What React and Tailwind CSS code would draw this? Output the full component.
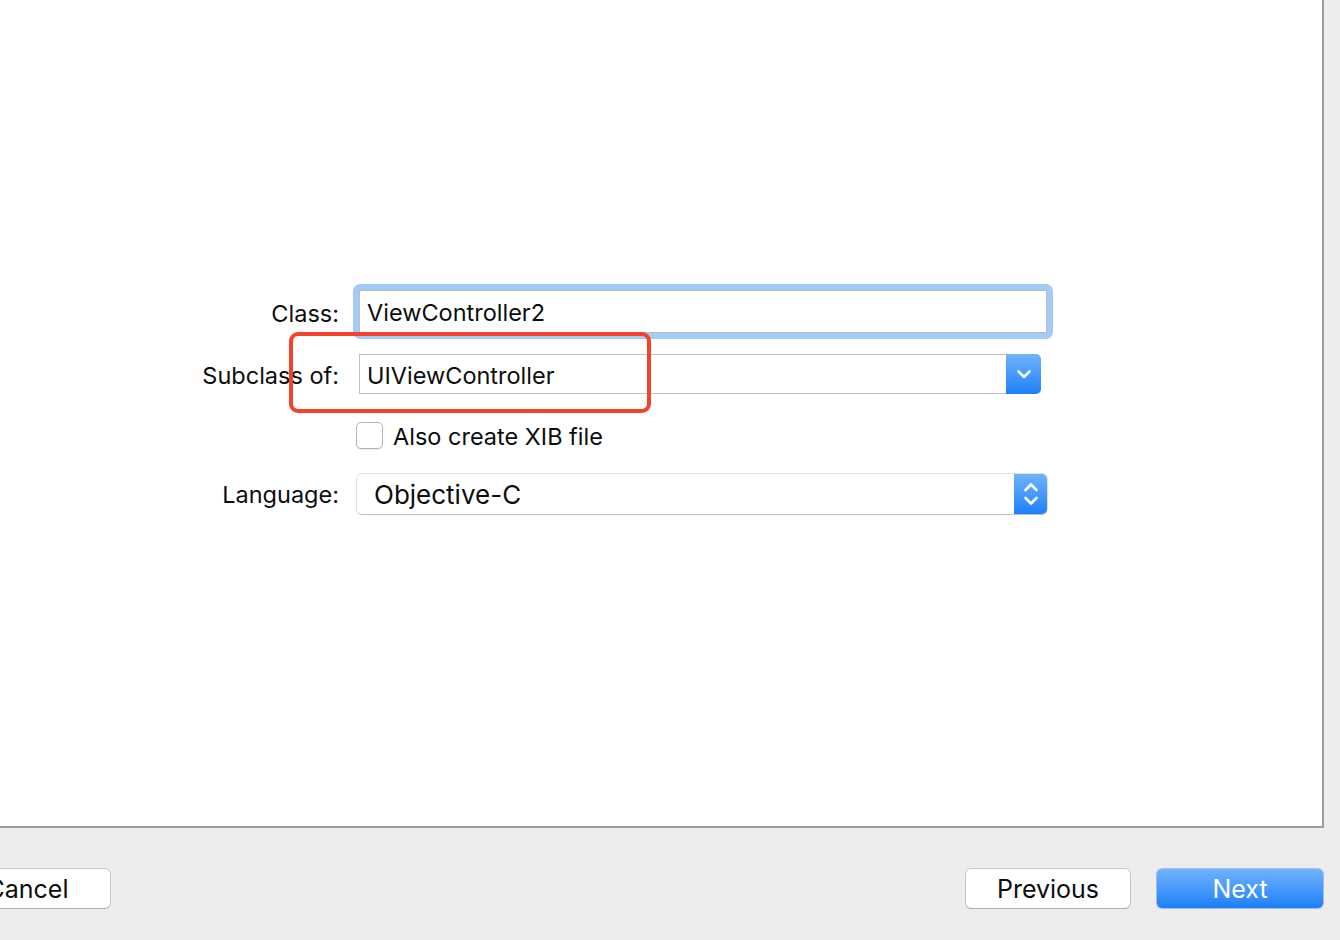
import React from "react";

function ChevronDown() {
  return (
    <svg width="16" height="11" viewBox="0 0 16 11" fill="none">
      <path d="M2.5 2.5 L8 8 L13.5 2.5" stroke="white" strokeWidth="2.6" strokeLinecap="round" strokeLinejoin="round" />
    </svg>
  );
}

function UpDown() {
  return (
    <svg width="18" height="28" viewBox="0 0 18 28" fill="none">
      <path d="M3.5 10 L9 4.5 L14.5 10" stroke="white" strokeWidth="2.6" strokeLinecap="round" strokeLinejoin="round" />
      <path d="M3.5 18 L9 23.5 L14.5 18" stroke="white" strokeWidth="2.6" strokeLinecap="round" strokeLinejoin="round" />
    </svg>
  );
}

export default function App() {
  const font = { fontFamily: "Inter, 'Liberation Sans', Arial, sans-serif" };
  return (
    <div className="w-[1340px] h-[940px] bg-[#ededed] overflow-hidden relative flex flex-col text-[#0d0d0d]" style={font}>
      <div className="w-[1324px] h-[828px] bg-white border-r-2 border-b-2 border-[#9d9d9d] relative">
        <div className="pt-[284px] flex flex-col">
          {/* Class row */}
          <div className="flex items-center h-[55px]">
            <div className="w-[339px] text-right text-[23.5px] leading-none pt-[4px]">Class:</div>
            <div className="ml-[14px] w-[700px] h-[55px] rounded-[7px] bg-[#a3cbf8] p-[6px]">
              <div className="w-full h-full bg-white border border-[#bdbdbd] flex items-center pl-[7px] pt-[3px] text-[23.5px] leading-none">
                ViewController2
              </div>
            </div>
          </div>
          {/* Subclass row */}
          <div className="flex items-center h-[40px] mt-[15px]">
            <div className="w-[339px] text-right text-[23.5px] leading-none pt-[4px]">Subclass of:</div>
            <div className="ml-[20px] w-[682px] h-[40px] flex">
              <div className="flex-1 bg-white border border-r-0 border-[#c2c2c2] flex items-center pl-[7px] pt-[3px] text-[23.5px] leading-none">
                UIViewController
              </div>
              <div className="w-[35px] h-full rounded-r-[5px] bg-gradient-to-b from-[#6db3fb] to-[#1a7ff9] flex items-center justify-center">
                <ChevronDown />
              </div>
            </div>
          </div>
          {/* Checkbox row */}
          <div className="flex items-center h-[27px] mt-[28px]">
            <div className="w-[339px]" />
            <div className="ml-[17px] w-[27px] h-[27px] rounded-[5px] border border-[#b3b3b3] bg-white shadow-[0_1px_1px_rgba(0,0,0,0.08)]" />
            <div className="ml-[10px] text-[23.5px] leading-none pt-[2px]">Also create XIB file</div>
          </div>
          {/* Language row */}
          <div className="flex items-center h-[40px] mt-[25px]">
            <div className="w-[339px] text-right text-[23.5px] leading-none pt-[2px]">Language:</div>
            <div className="ml-[18px] w-[690px] h-[40px] flex rounded-[5px] shadow-[0_0_0_1px_rgba(0,0,0,0.12),0_1px_1px_rgba(0,0,0,0.15)]">
              <div className="flex-1 bg-white rounded-l-[5px] flex items-center pl-[17px] pt-[1px] text-[26px] leading-none">
                Objective-C
              </div>
              <div className="w-[33px] h-full rounded-r-[5px] bg-gradient-to-b from-[#6db3fb] to-[#1a7ff9] flex items-center justify-center">
                <UpDown />
              </div>
            </div>
          </div>
        </div>
        {/* annotation */}
        <div className="absolute left-[289px] top-[332px] w-[362px] h-[81px] border-[4px] border-[#f4422b] rounded-[9px]" />
      </div>
      {/* Bottom buttons */}
      <div className="flex items-start pt-[41px]">
        <div className="ml-[-55px] w-[165px] h-[39px] bg-white rounded-[5px] shadow-[0_0_0_1px_rgba(0,0,0,0.15),0_1px_1px_rgba(0,0,0,0.15)] flex items-center justify-center pt-[2px] text-[25px] leading-none">
          Cancel
        </div>
        <div className="ml-auto w-[164px] h-[39px] bg-white rounded-[5px] shadow-[0_0_0_1px_rgba(0,0,0,0.15),0_1px_1px_rgba(0,0,0,0.15)] flex items-center justify-center pt-[2px] text-[25px] leading-none">
          Previous
        </div>
        <div className="ml-[27px] mr-[17px] w-[166px] h-[39px] rounded-[5px] bg-gradient-to-b from-[#6db3fb] to-[#1a7ff9] shadow-[0_0_0_1px_rgba(20,110,240,0.35)] flex items-center justify-center pt-[2px] text-[25px] leading-none text-white">
          Next
        </div>
      </div>
    </div>
  );
}
